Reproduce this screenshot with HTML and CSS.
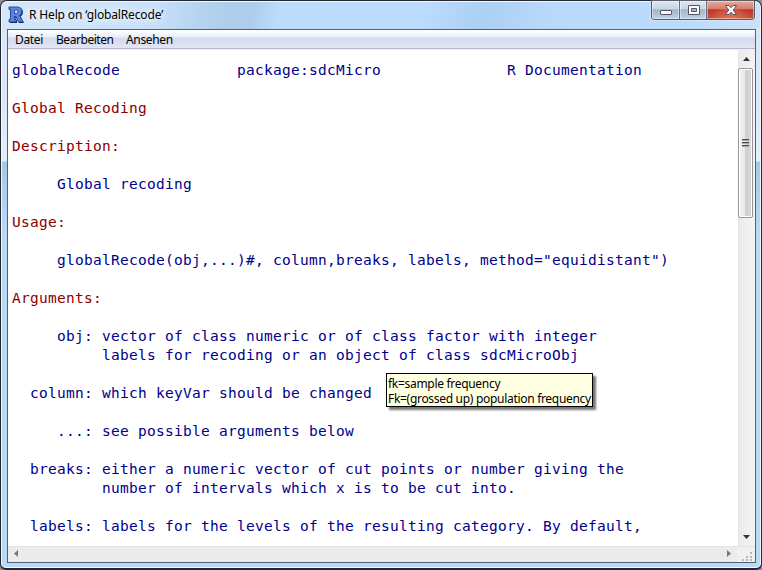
FILE: index.html
```
<!DOCTYPE html>
<html lang="de">
<head>
<meta charset="utf-8">
<title>R Help on 'globalRecode'</title>
<link rel="stylesheet" href="styles.css">
</head>
<body>
<div class="window">
  <header class="titlebar">
    <svg class="logo" width="17" height="18" viewBox="0 0 17 18">
      <path d="M2 2H10Q15 2 15 6.500Q15 9 12.500 10.200L16 17H11.200L8.500 11.500H7.500V14H9V17H2V14H3.500V5H2Z" fill="#18254c"/>
      <path d="M1 1H9Q14 1 14 5.500Q14 8.500 11.500 9.500L15 16H10.500L8 10.500H6.500V13.500H8V16H1V13.500H2.500V3.500H1Z" fill="#5a84e0" stroke="#1c3c96" stroke-width=".9"/>
      <path d="M6.500 4H8.500Q10 4 10 5.700Q10 7.500 8.500 7.500H6.500Z" fill="#c9dcf4" stroke="#1c3c96" stroke-width=".8"/>
    </svg>
    <span class="title">R Help on ‘globalRecode’</span>
    <div class="controls">
      <span class="btn min"><svg width="14" height="14" viewBox="0 0 14 14"><rect x="1.500" y="6.500" width="11" height="4" rx=".5" fill="#fff" stroke="#535666"/></svg></span>
      <span class="btn max"><svg width="14" height="14" viewBox="0 0 14 14"><path d="M1.500 1.500H12.500V10.500H1.500ZM4.500 4.500V7.500H9.500V4.500Z" fill="#fff" fill-rule="evenodd" stroke="#535666"/></svg></span>
      <span class="btn close"><svg width="14" height="14" viewBox="0 0 14 14"><path d="M1.500 1.500H5L7 3.800L9 1.500H12.500L9.200 6L12.500 10.500H9L7 8.200L5 10.500H1.500L4.800 6Z" fill="#fff" stroke="#535666"/></svg></span>
    </div>
  </header>
  <main class="client">
    <nav class="menu"><span class="datei">Datei</span><span class="bearbeiten">Bearbeiten</span><span class="ansehen">Ansehen</span></nav>
    <div class="view">
<pre class="doc">globalRecode             package:sdcMicro              R Documentation

<b>Global Recoding</b>

<b>Description:</b>

     Global recoding

<b>Usage:</b>

     globalRecode(obj,...)#, column,breaks, labels, method="equidistant")

<b>Arguments:</b>

     obj: vector of class numeric or of class factor with integer
          labels for recoding or an object of class sdcMicroObj

  column: which keyVar should be changed

     ...: see possible arguments below

  breaks: either a numeric vector of cut points or number giving the
          number of intervals which x is to be cut into.

  labels: labels for the levels of the resulting category. By default,</pre>
      <div class="vscroll">
        <svg class="arrow" width="16" height="17" viewBox="0 0 16 17"><path d="M4 11L7.500 7L11 11Z" fill="#333"/></svg>
        <div class="thumb"><i></i><i></i><i></i></div>
        <svg class="arrow down" width="16" height="17" viewBox="0 0 16 17"><path d="M4 6L7.500 10L11 6Z" fill="#333"/></svg>
      </div>
    </div>
    <div class="hscroll">
      <svg width="17" height="16" viewBox="0 0 17 16"><path d="M10 3V10L6 6.500Z" fill="#777"/></svg>
      <svg class="right" width="17" height="16" viewBox="0 0 17 16"><path d="M7 3V10L11 6.500Z" fill="#777"/></svg>
      <svg class="grip" width="18" height="15" viewBox="0 0 18 15"><path d="M13 5h2v2h-2zM9 9h2v2h-2zM13 9h2v2h-2zM5 12h2v2h-2zM9 12h2v2h-2zM13 12h2v2h-2z" fill="#b8b8b8"/></svg>
    </div>
  </main>
  <div class="tooltip"><div class="tip1">fk=sample frequency</div><div class="tip2">Fk=(grossed up) population frequency</div></div>
</div>
</body>
</html>
```
FILE: styles.css
```
* { box-sizing: border-box; }
body { margin: 0; background: #8d8d90; overflow: hidden; }
.window {
  position: relative;
  width: 762px;
  height: 570px;
  padding: 0 5px 5px;
  border: 1px solid #25272e;
  border-width: 1px 1px 2px;
  border-radius: 7px 7px 6px 6px;
  box-shadow: inset 0 0 0 1px #effaff;
  background: linear-gradient(#d5e5f8 0, #dce9fa 120px, #e5effb 160px, #a5c8ea 161px, #b9d9f7 230px, #b9d9f9 100%);
  font-family: "Noto Sans", "Open Sans", sans-serif;
  font-size: 12px;
  color: #000;
}
.titlebar {
  display: flex;
  height: 28px;
  margin: 0 -4px;
  padding: 0 5px 0 6px;
  border-top: 1px solid #effaff;
  border-radius: 6px 6px 0 0;
  background: linear-gradient(100deg, #d4e7fa 0, #c7e1f9 150px, #afcfec 215px, #aecdec 248px, #bbdcfb 275px, #bbdcfe 415px, #acd0f2 475px, #b9dafb 550px, #b9dbfc 670px, #cce1f7 100%);
}
.logo { margin-top: 4px; }
.title { margin: 5px 0 0 4px; line-height: 16px; letter-spacing: -.15px; white-space: nowrap; text-shadow: 0 0 6px #fff, 0 0 10px #fff; }
.controls { display: flex; width: 104px; height: 19px; margin: -1px 0 0 auto; border: 1px solid #525d6e; border-top: 0; border-radius: 0 0 4px 4px; overflow: hidden; box-shadow: 0 0 2px #fff; }
.btn { display: flex; justify-content: center; padding: 3px 0 0 1px; box-shadow: inset 0 0 0 1px #ffffff70; background: linear-gradient(#dce7f2 0, #c9d6e4 45%, #a3b4c8 48%, #bfd2e5 100%); }
.min { width: 28px; border-right: 1px solid #637082; }
.max { width: 27px; border-right: 1px solid #637082; }
.close { flex: 1; background: radial-gradient(ellipse at 50% 110%, #e8744e 0, #e8744e00 65%), linear-gradient(#e7ab9e 0, #d47d6d 45%, #bb3627 48%, #c75240 100%); }
.client { display: flex; flex-direction: column; width: 749px; height: 534px; margin-left: 1px; border: 1px solid #53626f; background: #fff; }
.menu { display: flex; height: 20px; padding-left: 7px; line-height: 20px; background: linear-gradient(#fff 0, #e9edf6 7px, #d5daec 8px, #e1e6f6 18px, #b4bacd 18px, #b4bacd 19px, #f0f0f0 19px); white-space: nowrap; }
.datei { width: 41px; letter-spacing: -.35px; }
.bearbeiten { width: 70px; letter-spacing: -.45px; }
.ansehen { letter-spacing: -.35px; }
.view { display: flex; height: 496px; }
.doc { flex: 1; margin: 0; padding: 11px 0 0 4px; font: 14.5px/19px "DejaVu Sans Mono", monospace; letter-spacing: .27px; color: #00008b; }
.doc b { font-weight: 400; color: #8b0000; }
.vscroll { display: flex; flex-direction: column; width: 17px; border-left: 1px solid #e5e5e5; background: linear-gradient(90deg, #ececec, #f3f3f3); }
.arrow { flex: none; }
.down { margin-top: auto; }
.thumb { display: flex; flex-direction: column; align-items: center; justify-content: center; gap: 1px; width: 15px; height: 150px; margin: 1px 0 0 -1px; border: 1px solid #979797; border-radius: 2px; box-shadow: inset 0 0 0 1px #fff; background: linear-gradient(90deg, #f5f5f5 0, #e7e7e9 45%, #cdced1 52%, #d8d9dc 100%); }
.thumb i { width: 7px; height: 2px; border-top: 1px solid #4c4c4c; background: #aaa; }
.hscroll { display: flex; height: 16px; background: #ebebeb; border-top: 1px solid #e3e3e3; }
.right { margin-left: auto; }
.grip { width: 18px; background: #f0f0f0; }
.tooltip { position: absolute; left: 385px; top: 372px; width: 207px; height: 34px; padding: 2px 0 0 1px; border: 1px solid #000; background: #ffffe1; box-shadow: 3px 3px 2px #777; line-height: 15px; white-space: nowrap; }
.tip1, .tip2 { letter-spacing: -.3px; }
```
